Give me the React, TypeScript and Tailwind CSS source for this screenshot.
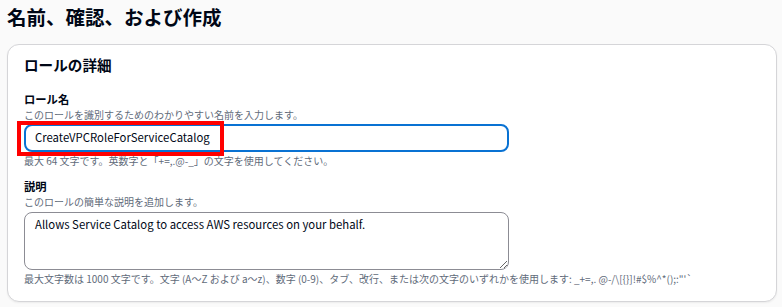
import React from "react";

const font = { fontFamily: '"Noto Sans CJK JP", "Noto Sans", sans-serif' };

export default function App() {
  return (
    <div
      className="w-[782px] h-[307px] bg-[#fafafa] overflow-hidden text-[#000716]"
      style={font}
    >
      <h1 className="pl-[7px] pt-[4px] h-[44px] text-[19.5px] font-bold leading-[26px]">
        名前、確認、および作成
      </h1>
      <div className="ml-[7px] mr-[5px] h-[258px] rounded-[12px] border border-[#d5d5d8] bg-white shadow-[0_1px_2px_rgba(0,0,0,0.06)] pl-[16px] pr-[16px] pt-[9px]">
        <h2 className="text-[14.6px] font-bold leading-[22px]">
          ロールの詳細
        </h2>
        <div className="mt-[14px] relative">
          <div className="text-[11.3px] font-bold leading-[18px]">
            ロール名
          </div>
          <div className="text-[10px] leading-[13px] text-[#5f6b7a]">
            このロールを識別するためのわかりやすい名前を入力します。
          </div>
          <div className="mt-[3px] w-[485px] h-[28px] rounded-[8px] border-2 border-[#0972d3] flex items-center pl-[9px] text-[11.35px]">
            CreateVPCRoleForServiceCatalog
          </div>
          <div className="absolute left-[-7px] top-[31px] w-[207px] h-[35px] border-4 border-[#f00]" />
          <div className="mt-[2px] text-[10px] leading-[14px] text-[#5f6b7a]">
            最大 64 文字です。英数字と「+=,.@-_」の文字を使用してください。
          </div>
        </div>
        <div className="mt-[9px]">
          <div className="text-[11.3px] font-bold leading-[18px]">説明</div>
          <div className="text-[10px] leading-[14px] text-[#5f6b7a]">
            このロールの簡単な説明を追加します。
          </div>
          <textarea
            className="mt-[3px] block w-[485px] h-[58px] rounded-[8px] border border-[#8c8c94] px-[10px] py-[2px] text-[11.35px] leading-[18px] text-[#000716] outline-none"
            style={font}
            defaultValue="Allows Service Catalog to access AWS resources on your behalf."
          />
          <div className="mt-[2px] text-[10px] leading-[14px] text-[#5f6b7a] whitespace-nowrap">
            最大文字数は 1000 文字です。文字 (A～Z および a～z)、数字 (0-9)、タブ、改行、または次の文字のいずれかを使用します: _+=,. @-/\[{"{}"}]!#$%^*();:"'`
          </div>
        </div>
      </div>
    </div>
  );
}
